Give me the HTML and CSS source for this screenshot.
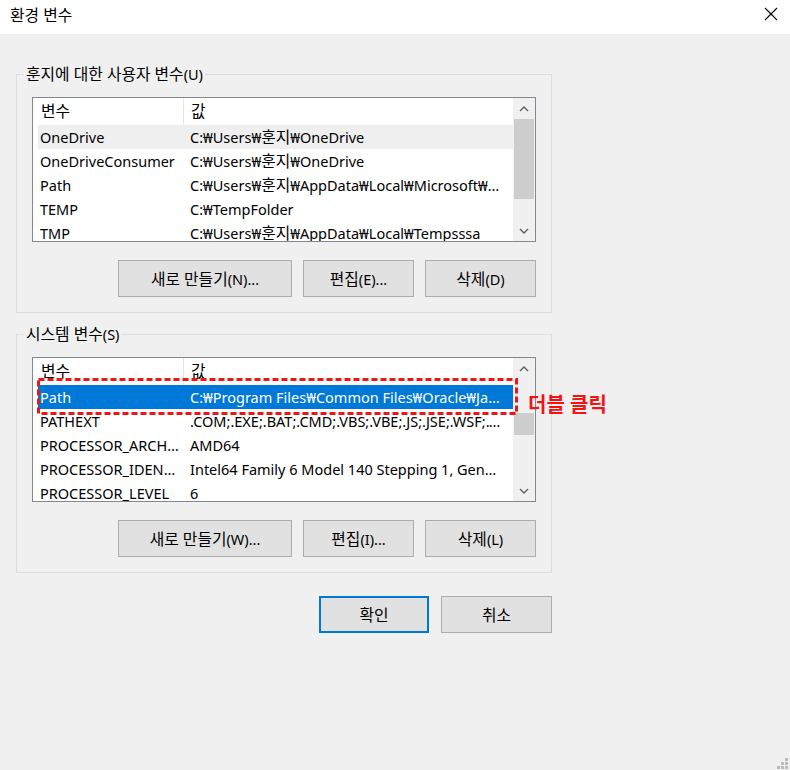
FILE: index.html
```html
<!DOCTYPE html>
<html lang="ko">
<head>
    <meta charset="UTF-8">
    <title>환경 변수</title>
    <link rel="stylesheet" href="styles.css">
</head>
<body>
    <div id="window">
        <div class="titlebar">
            <span class="title ko">환경 변수</span>
            <svg class="close" width="14" height="14" viewBox="0 0 14 14">
                <path d="M1 1 L13 13 M13 1 L1 13" stroke="#000" stroke-width="1.1" fill="none"/>
            </svg>
        </div>

        <div class="content">
            <fieldset class="group">
                <legend><span class="ko">훈지에 대한 사용자 변수</span>(U)</legend>
                <div class="list">
                    <div class="list-main">
                        <div class="list-head">
                            <span class="head-name ko">변수</span>
                            <span class="head-value ko">값</span>
                        </div>
                        <div class="row hover"><span class="name">OneDrive</span><span class="value">C:₩Users₩<span class="ko">훈지</span>₩OneDrive</span></div>
                        <div class="row"><span class="name">OneDriveConsumer</span><span class="value">C:₩Users₩<span class="ko">훈지</span>₩OneDrive</span></div>
                        <div class="row"><span class="name">Path</span><span class="value">C:₩Users₩<span class="ko">훈지</span>₩AppData₩Local₩Microsoft₩WindowsApps;</span></div>
                        <div class="row"><span class="name">TEMP</span><span class="value">C:₩TempFolder</span></div>
                        <div class="row"><span class="name">TMP</span><span class="value">C:₩Users₩<span class="ko">훈지</span>₩AppData₩Local₩Tempsssa</span></div>
                    </div>
                    <div class="scrollbar">
                        <div class="arrow"><svg width="10" height="6" viewBox="0 0 10 6"><path d="M1 5 L5 1 L9 5" stroke="#606060" stroke-width="1.4" fill="none"/></svg></div>
                        <div class="track"><div class="thumb user-thumb"></div></div>
                        <div class="arrow"><svg width="10" height="6" viewBox="0 0 10 6"><path d="M1 1 L5 5 L9 1" stroke="#606060" stroke-width="1.4" fill="none"/></svg></div>
                    </div>
                </div>
                <div class="buttons">
                    <button class="btn wide"><span class="ko">새로 만들기</span>(N)...</button>
                    <button class="btn"><span class="ko">편집</span>(E)...</button>
                    <button class="btn"><span class="ko">삭제</span>(D)</button>
                </div>
            </fieldset>

            <fieldset class="group system">
                <legend><span class="ko">시스템 변수</span>(S)</legend>
                <div class="list">
                    <div class="list-main">
                        <div class="list-head">
                            <span class="head-name ko">변수</span>
                            <span class="head-value ko">값</span>
                        </div>
                        <div class="row selected"><span class="name">Path</span><span class="value">C:₩Program Files₩Common Files₩Oracle₩Java₩javapath;</span></div>
                        <div class="row"><span class="name">PATHEXT</span><span class="value">.COM;.EXE;.BAT;.CMD;.VBS;.VBE;.JS;.JSE;.WSF;.WSH;.MSC</span></div>
                        <div class="row"><span class="name">PROCESSOR_ARCHITECTURE</span><span class="value">AMD64</span></div>
                        <div class="row"><span class="name">PROCESSOR_IDENTIFIER</span><span class="value">Intel64 Family 6 Model 140 Stepping 1, GenuineIntel</span></div>
                        <div class="row"><span class="name">PROCESSOR_LEVEL</span><span class="value">6</span></div>
                    </div>
                    <div class="scrollbar">
                        <div class="arrow"><svg width="10" height="6" viewBox="0 0 10 6"><path d="M1 5 L5 1 L9 5" stroke="#606060" stroke-width="1.4" fill="none"/></svg></div>
                        <div class="track"><div class="thumb system-thumb"></div></div>
                        <div class="arrow"><svg width="10" height="6" viewBox="0 0 10 6"><path d="M1 1 L5 5 L9 1" stroke="#606060" stroke-width="1.4" fill="none"/></svg></div>
                    </div>
                </div>
                <div class="buttons">
                    <button class="btn wide"><span class="ko">새로 만들기</span>(W)...</button>
                    <button class="btn"><span class="ko">편집</span>(I)...</button>
                    <button class="btn"><span class="ko">삭제</span>(L)</button>
                </div>
            </fieldset>

            <div class="dialog-buttons">
                <button class="btn default"><span class="ko">확인</span></button>
                <button class="btn"><span class="ko">취소</span></button>
            </div>
        </div>

        <!-- annotation drawn over the screenshot -->
        <svg class="mark" width="481" height="37" viewBox="0 0 481 37">
            <rect x="1.5" y="1.5" width="478" height="34" fill="none" stroke="#f01414" stroke-width="3" stroke-dasharray="6 3"/>
        </svg>
        <span class="mark-label">더블 클릭</span>

        <svg class="grip" width="12" height="12" viewBox="0 0 12 12">
            <rect x="9" y="1" width="3" height="3" fill="#bcbcbc"/>
            <rect x="5" y="5" width="3" height="3" fill="#bcbcbc"/>
            <rect x="9" y="5" width="3" height="3" fill="#bcbcbc"/>
            <rect x="1" y="9" width="3" height="3" fill="#bcbcbc"/>
            <rect x="5" y="9" width="3" height="3" fill="#bcbcbc"/>
            <rect x="9" y="9" width="3" height="3" fill="#bcbcbc"/>
        </svg>
    </div>
</body>
</html>
```

FILE: styles.css
```css
* {
    box-sizing: border-box;
}

body {
    margin: 0;
    padding: 0;
    font-family: "Noto Sans", "Noto Sans CJK KR", sans-serif;
    font-size: 14.5px;
    color: #000;
}

/* hangul looks bigger in the original font */
.ko {
    font-size: 15.8px;
}

#window {
    position: relative;
    width: 790px;
    height: 770px;
    background-color: #f0f0f0;
    overflow: hidden;
}

.titlebar {
    height: 34px;
    background-color: #fff;
    display: flex;
    justify-content: space-between;
    align-items: flex-start;
    padding: 5px 12px 0 10px;
    line-height: 20px;
}

.titlebar .close {
    margin-top: 2px;
}

.content {
    padding: 30px 0 0 16px;
    width: 552px;
}

.group {
    width: 536px;
    margin: 0;
    padding: 13px 15px 15px 15px;
    border: 1px solid #dcdcdc;
}

.group.system {
    margin-top: 11px;
}

.group legend {
    height: 20px;
    line-height: 20px;
    padding: 0 2px;
    margin-left: -8px;
}

.list {
    display: flex;
    height: 145px;
    border: 1px solid #828790;
    background-color: #fff;
    overflow: hidden;
}

.list-main {
    width: 480px;
    overflow: hidden;
}

.list-head {
    display: flex;
    height: 27px;
    line-height: 27px;
}

.head-name {
    width: 151px;
    padding-left: 8px;
    border-right: 1px solid #e5e5e5;
}

.head-value {
    padding-left: 7px;
}

.row {
    display: flex;
    height: 24px;
    line-height: 24px;
    margin-left: 5px;
    white-space: nowrap;
}

.row .name {
    width: 150px;
    flex-shrink: 0;
    padding: 0 6px 0 2px;
    overflow: hidden;
    text-overflow: ellipsis;
}

.row .value {
    flex: 1;
    min-width: 0;
    padding: 0 9px 0 2px;
    overflow: hidden;
    text-overflow: ellipsis;
}

.row .ko {
    line-height: 20px;
}

.row.hover {
    background-color: #efefef;
}

.row.selected {
    background-color: #0078d7;
    color: #fff;
}

.scrollbar {
    width: 22px;
    display: flex;
    flex-direction: column;
    background-color: #f0f0f0;
}

.scrollbar .arrow {
    height: 21px;
    display: flex;
    align-items: center;
    justify-content: center;
}

.scrollbar .track {
    flex: 1;
    padding: 0 1px;
}

.thumb {
    background-color: #cdcdcd;
}

.user-thumb {
    height: 80px;
}

.system-thumb {
    height: 22px;
    margin-top: 34px;
}

.buttons {
    display: flex;
    justify-content: flex-end;
    gap: 11px;
    margin-top: 18px;
}

.btn {
    height: 37px;
    width: 111px;
    font-family: inherit;
    font-size: 14.5px;
    color: #000;
    background-color: #e1e1e1;
    border: 1px solid #adadad;
    padding: 0;
}

.btn.wide {
    width: 174px;
}

.btn.default {
    width: 110px;
    border: 2px solid #0078d7;
}

.dialog-buttons {
    display: flex;
    justify-content: flex-end;
    gap: 12px;
    width: 536px;
    margin-top: 23px;
}

.mark {
    position: absolute;
    left: 37px;
    top: 378px;
}

.mark-label {
    position: absolute;
    left: 528px;
    top: 394px;
    color: #f01414;
    font-weight: bold;
    font-size: 20px;
    line-height: 22px;
}

.grip {
    position: absolute;
    right: 2px;
    bottom: 1px;
}
```
